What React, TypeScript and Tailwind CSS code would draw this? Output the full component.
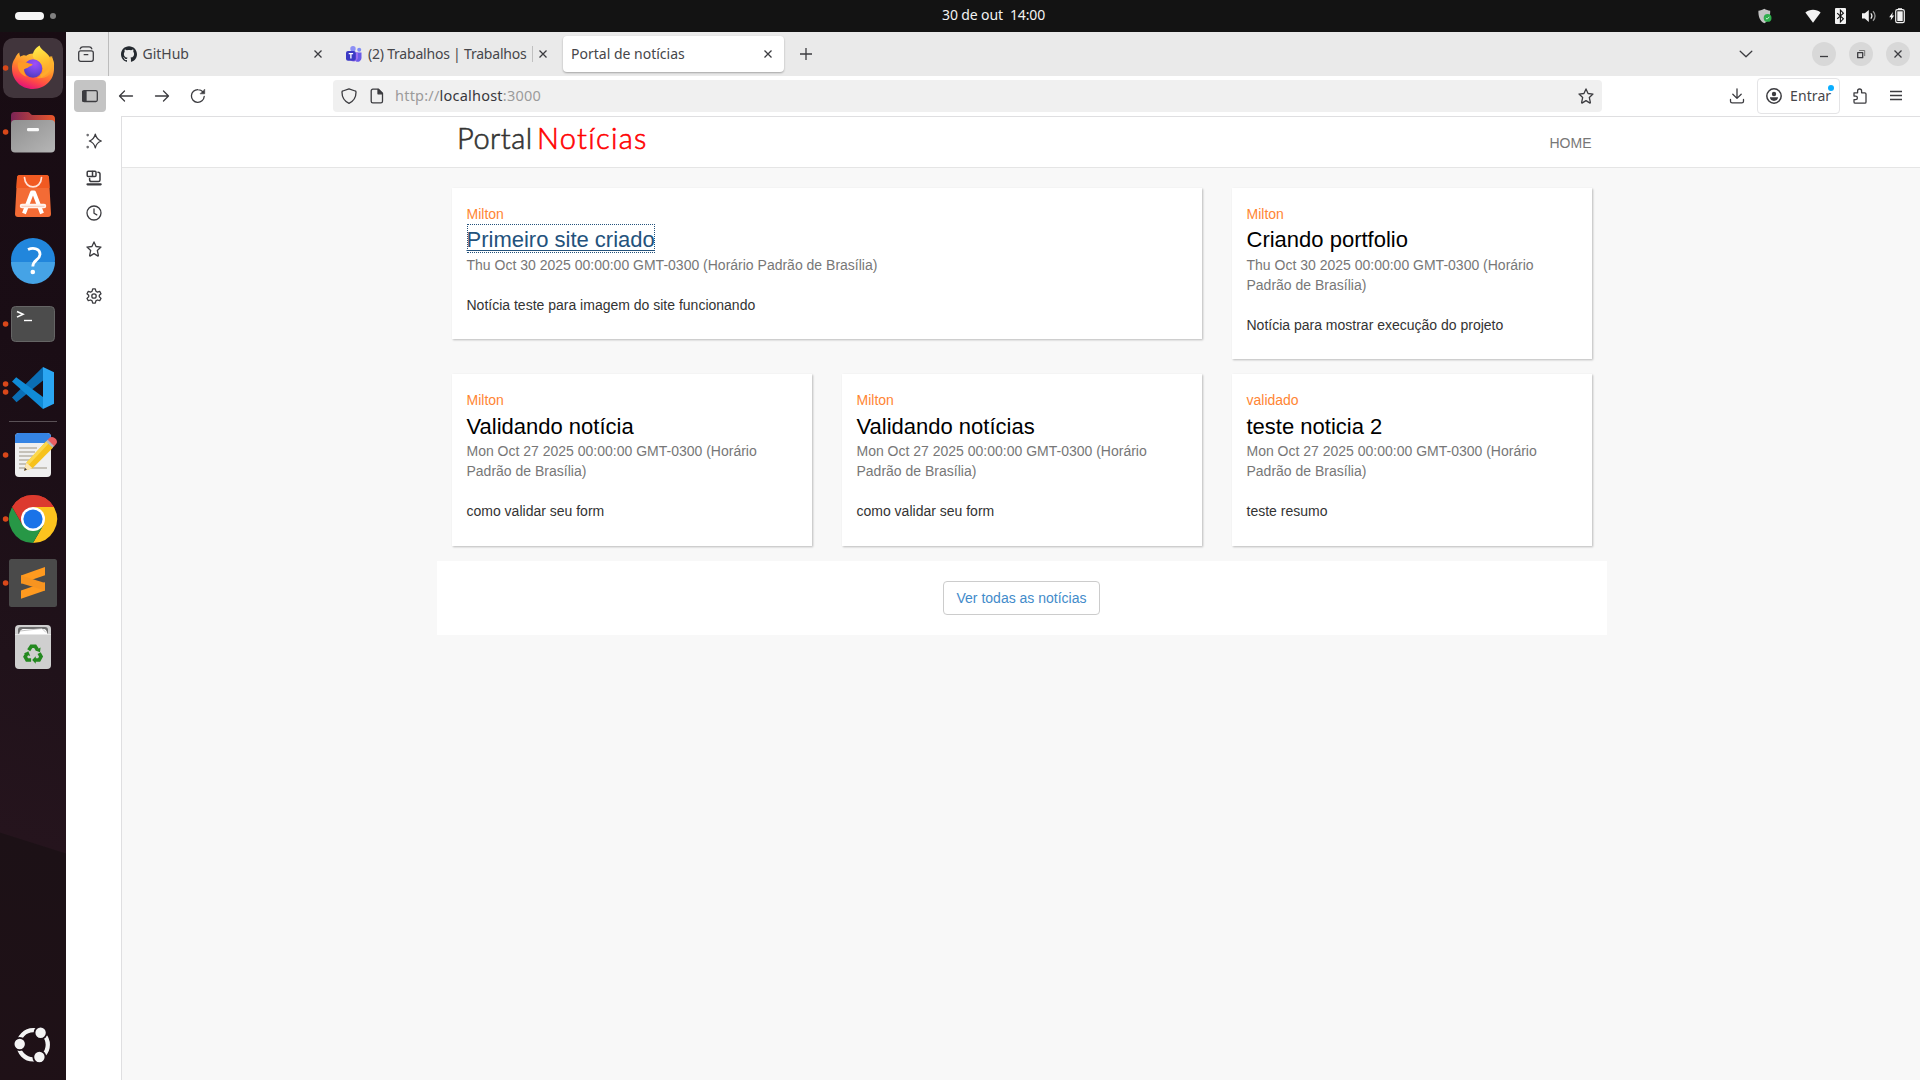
import React from "react";
import { SiGithub } from "react-icons/si";

type IconProps = { children: React.ReactNode; size?: number; className?: string };

function Line({ children, size = 16, className = "" }: IconProps) {
  return (
    <svg
      width={size}
      height={size}
      viewBox="0 0 16 16"
      fill="none"
      stroke="#3c3c40"
      strokeWidth="1.3"
      strokeLinecap="round"
      strokeLinejoin="round"
      className={"shrink-0 " + className}
    >
      {children}
    </svg>
  );
}

const STAR =
  "M8 .9l2.05 4.6 4.95.55-3.7 3.4 1.05 4.95c.1.55-.3.75-.7.5L8 12.6l-3.65 2.3c-.4.25-.8.05-.7-.5L4.7 9.45 1 6.05l4.95-.55z";

function CloseGlyph() {
  return (
    <Line>
      <path d="M4.5 4.5l7 7M11.5 4.5l-7 7" strokeLinecap="butt" />
    </Line>
  );
}

/* ---------- System bar ---------- */

function TopBar() {
  return (
    <header className="relative flex h-8 shrink-0 items-center bg-[#131313] text-[#f2f2f2]">
      <div className="ml-[15px] h-2 w-[29px] rounded-full bg-[#f6f6f6]" />
      <div className="ml-[6px] h-[6px] w-[6px] rounded-full bg-[#808080]" />
      <div className="absolute left-[942px] top-[5px] whitespace-pre text-[14px] leading-5 tracking-[-0.12px]">
        30 de out&nbsp;&nbsp;14:00
      </div>
      <div className="ml-auto flex items-center pr-[15px]">
        <svg width="14" height="16" viewBox="0 0 14 16" className="mr-[33px]">
          <path d="M6.3.8C4.600 2 2.500 2.600.4 2.700c-.1 5 .9 10 5.900 12.500 4.800-2.400 6-7.500 5.900-12.500C10.100 2.600 8 2 6.300.8z" fill="#c4c4c4" />
          <circle cx="9.600" cy="9.900" r="3.900" fill="#2fae4c" />
          <path d="M7.900 10l1.200 1.200 2.200-2.400" stroke="#d9f5df" fill="none" strokeWidth=".9" />
        </svg>
        <svg width="16" height="16" viewBox="0 0 16 16">
          <path d="M.4 4.600C4.600.8 11.400.8 15.600 4.600L8 14.800z" fill="#f2f2f2" />
        </svg>
        <svg width="11" height="16" viewBox="0 0 11 16" className="ml-[14px]">
          <rect width="11" height="16" rx="1" fill="#f2f2f2" />
          <path d="M2.200 5.200l6.200 5.600-3 3V2.200l3 3-6.200 5.600" fill="none" stroke="#131313" strokeWidth="1.100" />
        </svg>
        <svg width="16" height="16" viewBox="0 0 16 16" className="ml-[15px]">
          <path d="M1 5.200h2.800L7.800 2v12l-4-3.400H1z" fill="#f2f2f2" />
          <path d="M9.800 5.400c1.300 1.500 1.300 3.700 0 5.200" fill="none" stroke="#f2f2f2" strokeWidth="1.300" />
          <path d="M12 3.200c2.700 2.700 2.700 6.900 0 9.600" fill="none" stroke="#9a9a9a" strokeWidth="1.300" />
        </svg>
        <svg width="16" height="16" viewBox="0 0 16 16" className="ml-3">
          <path d="M3.900 4L.2 9.200h2l-.6 3.400 3.600-5h-2z" fill="#f2f2f2" />
          <path d="M9 .2h4v1.600H9z" fill="#f2f2f2" />
          <rect x="6.700" y="1.700" width="8.600" height="13" rx="1.600" fill="none" stroke="#f2f2f2" strokeWidth="1.200" />
          <rect x="8.300" y="3.300" width="5.400" height="9.800" fill="#f2f2f2" />
        </svg>
      </div>
    </header>
  );
}

/* ---------- Dock ---------- */

function DockItem({ dots = 0, active = false, children }: { dots?: number; active?: boolean; children: React.ReactNode }) {
  return (
    <div className="h-16 w-[66px] shrink-0">
      <svg width="66" height="64" viewBox="0 0 66 64">
        {active && <rect x="3" y="2" width="60" height="60" rx="10.500" fill="#41353c" />}
        {children}
        {dots === 1 && <circle cx="5.600" cy="32" r="2.800" fill="#d9481a" />}
        {dots === 2 && (
          <>
            <circle cx="5.600" cy="28" r="2.800" fill="#d9481a" />
            <circle cx="5.600" cy="36" r="2.800" fill="#d9481a" />
          </>
        )}
      </svg>
    </div>
  );
}

function Dock() {
  return (
    <aside className="flex w-[66px] shrink-0 flex-col bg-[linear-gradient(197.6deg,#180c13_0%,#1a0d15_30%,#20121a_60%,#25141d_76.8%,#1c1116_76.9%,#1f1117_100%)] pt-1">
      <DockItem dots={1} active>
        <defs>
          <linearGradient id="ffBody" x1=".75" y1=".1" x2=".35" y2="1">
            <stop offset="0" stopColor="#ffcb3a" />
            <stop offset=".42" stopColor="#ff8a2a" />
            <stop offset=".72" stopColor="#ff4a46" />
            <stop offset="1" stopColor="#e2107a" />
          </linearGradient>
          <linearGradient id="ffFlame" x1="0" y1="0" x2=".2" y2="1">
            <stop offset="0" stopColor="#fff24e" />
            <stop offset=".55" stopColor="#ffc130" />
            <stop offset="1" stopColor="#ff9a2c" />
          </linearGradient>
          <radialGradient id="ffGlobe" cx=".6" cy=".25" r=".8">
            <stop offset="0" stopColor="#a04dfb" />
            <stop offset=".55" stopColor="#7146e0" />
            <stop offset="1" stopColor="#4b3ab8" />
          </radialGradient>
        </defs>
        <path
          d="M33 53C21 53 12 44 12 32.500c0-5.500 1.700-8.200 3.300-10.700.6-1.800 1.600-3.700 4-5.400 0 2 .6 3.300 1.200 4.300 1.600-1.400 4.200-2 5.700-.9 3-2.300 7-2.800 10-1.800 8-1.500 16 3 17.300 8.800.6 2 .5 4 .5 6C54 44 45 53 33 53z"
          fill="url(#ffBody)"
        />
        <path
          d="M39.500 9.500c-5 3-7.500 7.500-6.300 11.800.6 2.200 3.300 3 5.700 4.500 4.100 2.700 5.100 8.200 2.600 12.200-1.500 2.400-3.500 3.500-5 4 8 1.500 16.500-3.500 17.500-11.500.4-3.200-.3-7.500-3.200-10.500 0 1-.3 1.600-.8 2-1.700-5.500-9-7.500-10.500-12.500z"
          fill="url(#ffFlame)"
        />
        <path d="M50.800 20.500c1.600 9-2 16.500-10.300 19.500" fill="none" stroke="#ffb02c" strokeWidth="3" opacity=".7" />
        <circle cx="33" cy="32.500" r="9.300" fill="url(#ffGlobe)" />
        <path
          d="M18 26.300c4 .3 8-.8 10.300 1 1.500.3 4 .3 4.300 1.200.2 1-3.300 1.900-4.300 2.800-1.200 1.200-2.800 1-4.300 2.200.2 3 .9 5.500 3 7.300-6.500-1.500-10.300-8-9-14.500z"
          fill="#ff9a26"
        />
      </DockItem>

      <DockItem dots={1}>
        <defs>
          <linearGradient id="fdBack" x1="0" x2="1">
            <stop offset="0" stopColor="#7b2456" />
            <stop offset="1" stopColor="#e9572a" />
          </linearGradient>
          <linearGradient id="fdFront" x1="0" y1="0" x2="1" y2="1">
            <stop offset="0" stopColor="#8f8f8f" />
            <stop offset="1" stopColor="#b6b6b6" />
          </linearGradient>
        </defs>
        <path d="M11 26V15.500a3.500 3.500 0 013.500-3.500H28c2 0 2.500 3 4.500 3H51a4 4 0 014 4v10H11z" fill="url(#fdBack)" />
        <rect x="11" y="20" width="44" height="32.500" rx="4" fill="url(#fdFront)" />
        <rect x="27" y="28" width="12" height="3.200" rx="1.200" fill="#fafafa" />
      </DockItem>

      <DockItem>
        <path d="M20 11h26a3 3 0 013 3l2 36a3 3 0 01-3 3H18a3 3 0 01-3-3l2-36a3 3 0 013-3z" fill="#f36b35" />
        <path d="M20 11h26a3 3 0 013 3l.6 10H16.400L17 14a3 3 0 013-3z" fill="#f15a22" />
        <path d="M24.500 13.500c.5 12.500 16.500 12.500 17 0" fill="none" stroke="#ffe3d8" strokeWidth="1.700" strokeLinecap="round" />
        <path d="M24 49.500l8-21h2l8 21" fill="none" stroke="#fff" strokeWidth="4" strokeLinejoin="round" />
        <path d="M22 42h22" stroke="#fff3ee" strokeWidth="4.500" strokeLinecap="round" />
        <path d="M21.500 42.300h23" stroke="#f9b59b" strokeWidth=".7" />
      </DockItem>

      <DockItem>
        <circle cx="33" cy="32" r="22" fill="#2186dc" />
        <path d="M11 34h44a22 22 0 01-44 0z" fill="#45a3e6" />
        <path d="M28 21.500c6-2.800 12.300-.2 12 5-.3 5.500-7.200 5.500-7.200 12" fill="none" stroke="#fff" strokeWidth="2.800" />
        <circle cx="32.800" cy="44" r="2.300" fill="#fff" />
      </DockItem>

      <DockItem dots={1}>
        <rect x="11.500" y="14.500" width="43" height="35" rx="4" fill="#4c4c4c" stroke="#656565" />
        <path d="M17 19.500l6 2.800-6 2.800" fill="none" stroke="#fff" strokeWidth="1.600" />
        <path d="M24 28.500h8" stroke="#fff" strokeWidth="1.400" />
      </DockItem>

      <DockItem dots={2}>
        <path d="M12 41.500l4.500 4.800L43 24.500V11z" fill="#0a6eb5" />
        <path d="M12 25.500l4.200-4.300L43 41v12z" fill="#108bd6" />
        <path d="M43 11l11 5.200v31.600L43 53z" fill="#2ba6f2" />
      </DockItem>

      <div className="flex h-[3px] shrink-0 items-center justify-center">
        <div className="h-px w-12 bg-[#5a5156]" />
      </div>

      <DockItem dots={1}>
        <rect x="15" y="10" width="36" height="44" rx="4" fill="#efefef" />
        <path d="M15 20v-6a4 4 0 014-4h28a4 4 0 014 4v6z" fill="#3584e4" />
        <path d="M19 25h18M19 29h16M19 33h14M19 37h12M19 41h8M19 45h28" stroke="#c5c1b9" strokeWidth="1.800" />
        <path d="M24 47.700l2.500-8.200L46.500 18l6.700 6.400-20.700 20.800z" fill="#f6c21c" />
        <path d="M26.500 39.500L46.500 18l2.300 2.200-20 21.500z" fill="#fbd84e" />
        <path d="M24 47.700l2.500-8.200 6 5.700z" fill="#fbe6b6" />
        <path d="M24 47.700l.9-2.900 2.100 2z" fill="#3d3846" />
        <path d="M47.500 17l2-2.200c3.500-3 9.500 2.200 6.800 6l-2.300 2.700z" fill="#ea5f62" />
        <path d="M46 18.500l1.700-1.700 6.500 6.200-1.600 1.800z" fill="#b9b9bd" />
      </DockItem>

      <DockItem dots={1}>
        <path d="M33 32L12.200 20A24 24 0 0153.800 20z" fill="#dc3a2e" />
        <path d="M33 20h20.800A24 24 0 0133 56l10.400-18z" fill="#fcc31e" />
        <path d="M12.200 20A24 24 0 0033 56l10.400-18-20.800 0z" fill="#279746" />
        <path d="M12.200 20A24 24 0 0153.800 20H33L22.600 38z" fill="#dc3a2e" />
        <circle cx="33" cy="32" r="12" fill="#fff" />
        <circle cx="33" cy="32" r="9.600" fill="#1a73e8" />
      </DockItem>

      <DockItem dots={1}>
        <rect x="9" y="8" width="48" height="48" rx="2.500" fill="#4a4a4a" />
        <path d="M21 24.500l24-8.500v8.200l-24 8.300z" fill="#ff9a1f" />
        <path d="M21 39.500l24-8.300v8.200L21 47.700z" fill="#ff9a1f" />
        <path d="M21 24.500l24 7.600v7.400l-24-7.300z" fill="#f79420" />
      </DockItem>

      <DockItem>
        <rect x="15" y="10" width="36" height="44" rx="4" fill="#cfcfcf" />
        <rect x="18" y="12" width="30" height="8" rx="3" fill="#6d6d6d" />
        <path d="M19 19.500c1-4 2-5.500 5-5.500h19c3 0 4 2 4.500 5.500z" fill="#fff" />
        <path d="M20 16l22-2.500 4 4" fill="none" stroke="#b5b5b5" strokeWidth=".8" />
        <path d="M15 19.500h36" stroke="#e6e6e6" />
        <g transform="translate(1.200 1.600) scale(.965 .95)">
          <g fill="none" stroke="#23881f" strokeWidth="3.700">
            <path d="M28.500 35.500l2.700-4.200h4l2.300 3.600" />
            <path d="M39.300 38.500l2 3.600-2 3.600H34" />
            <path d="M31 45.700h-4.300l-1.900-3.500 2.100-3.600" />
          </g>
          <path d="M40.800 32.500l-.6 5-4.700-1.700zM35.800 41.700v8l-3.700-4zM23.500 39l4.600-2.400 2 4.800z" fill="#23881f" />
        </g>
      </DockItem>

      <div className="mt-auto flex h-[73px] w-[66px] items-center justify-center">
        <svg width="40" height="40" viewBox="0 0 40 40">
          <circle cx="20.200" cy="20.800" r="14.600" fill="none" stroke="#f4f4f4" strokeWidth="4.300" />
          <g fill="#f4f4f4" stroke="#1e1118" strokeWidth="1.800">
            <circle cx="6.700" cy="20" r="6.100" />
            <circle cx="27.600" cy="8.800" r="6.100" />
            <circle cx="26.400" cy="33" r="6.100" />
          </g>
        </svg>
      </div>
    </aside>
  );
}

/* ---------- Browser chrome ---------- */

function TabStrip() {
  return (
    <div className="flex h-11 shrink-0 items-center bg-[#eaeaea] text-[14px] leading-5 text-[#46464a]">
      <div className="flex h-full w-[43px] items-center justify-center border-r border-[#bcbcbc]">
        <Line className="-ml-[2px]">
          <rect x=".7" y="4.800" width="14.600" height="10.500" rx="2" />
          <path d="M2.200 2.800c.4-1.300 1.300-2 2.600-2h6.400c1.300 0 2.200.7 2.600 2M6.200 8.700h3.600" />
        </Line>
      </div>
      <div className="ml-1 flex w-[225px] items-center pl-2">
        <SiGithub size={16} color="#24292f" className="shrink-0" />
        <span className="ml-[5.5px] tracking-[-0.02px]">GitHub</span>
        <div className="ml-auto mr-3">
          <CloseGlyph />
        </div>
      </div>
      <div className="flex w-[225px] items-center pl-2">
        <svg width="16" height="16" viewBox="0 0 16 16" className="shrink-0">
          <circle cx="13.200" cy="3.800" r="2" fill="#7e8bf5" />
          <circle cx="7" cy="2.800" r="2.700" fill="#8c8ff5" />
          <path d="M10 6.600h5.500v5.400a3.900 3.900 0 01-5.500 3.500z" fill="#6a5be8" />
          <path d="M3.500 6.600H12v5.200a4.300 4.300 0 01-8.500 0z" fill="#9a6ef0" />
          <rect x="0" y="5" width="9.800" height="9.800" rx="2" fill="#3b39c4" />
          <path d="M2.700 7.600h4.400M4.900 7.600v5" stroke="#fff" strokeWidth="1.300" />
        </svg>
        <span className="ml-[6px] w-[164px] whitespace-nowrap tracking-[-0.21px]">(2) Trabalhos | Trabalhos</span>
        <span className="h-4 w-px bg-[#c0c0c0]" />
        <div className="ml-auto mr-3">
          <CloseGlyph />
        </div>
      </div>
      <div className="flex h-9 w-[221px] items-center rounded bg-white pl-2 shadow-[0_1px_2px_rgba(0,0,0,0.3)]">
        <span>Portal de notícias</span>
        <div className="ml-auto mr-2">
          <CloseGlyph />
        </div>
      </div>
      <Line className="ml-[13.5px]">
        <path d="M8 2v12M2 8h12" strokeLinecap="butt" />
      </Line>
      <Line className="ml-auto mr-[58px]">
        <path d="M2.200 5.200L8 10.800l5.800-5.600" />
      </Line>
      <div className="mr-[10px] flex gap-[13px]">
        <div className="flex h-6 w-6 items-center justify-center rounded-full bg-[#d8d8d8]">
          <Line>
            <path d="M4 10.500h8" strokeLinecap="butt" />
          </Line>
        </div>
        <div className="flex h-6 w-6 items-center justify-center rounded-full bg-[#d8d8d8]">
          <Line>
            <path d="M4.700 6.700h5v5h-5z" />
            <path d="M6.500 4.500h5.200v5.200" strokeWidth="1" stroke="#777" />
          </Line>
        </div>
        <div className="flex h-6 w-6 items-center justify-center rounded-full bg-[#d8d8d8]">
          <CloseGlyph />
        </div>
      </div>
    </div>
  );
}

function NavBar() {
  return (
    <div className="flex h-10 shrink-0 items-center bg-white text-[14px] leading-5 text-[#46464a]">
      <div className="ml-2 flex h-8 w-8 items-center justify-center rounded bg-[#c4c4c4]">
        <Line>
          <rect x=".7" y="2.700" width="14.600" height="10.800" rx="1.500" />
          <path d="M.7 3.500h3.300v9.600H.7z" fill="#3c3c40" />
        </Line>
      </div>
      <div className="ml-3 flex items-center gap-5">
        <Line>
          <path d="M14.500 8H1.600M6.500 3L1.500 8l5 5" />
        </Line>
        <Line>
          <path d="M1.500 8h12.900M9.500 3l5 5-5 5" />
        </Line>
        <Line>
          <path d="M14.200 8.500A6.400 6.400 0 118 1.600c2 0 3.800.9 5 2.300" />
          <path d="M14.700 1.500v4.300h-4.300z" fill="#3c3c40" strokeWidth=".6" />
        </Line>
      </div>
      <div className="ml-[127px] flex h-8 w-[1269px] items-center rounded bg-[#f0f0f0] pl-2 pr-2">
        <Line>
          <path d="M8 .8L14.200 3c.8 0 .8.4.8 1 .1 5.200-2.300 9.300-7 11.300C3.300 13.300.9 9.200 1 4c0-.6 0-1 .8-1z" />
        </Line>
        <Line className="ml-3">
          <path d="M3.800 1.200h5.700l4 4v8a1.600 1.600 0 01-1.600 1.600H3.800a1.600 1.600 0 01-1.600-1.600V2.800a1.600 1.600 0 011.600-1.600z" />
          <path d="M9 1.400v4.400h4.400z" fill="#3c3c40" />
        </Line>
        <span className="mb-[2px] ml-[10px] text-[14.5px] tracking-[0.22px] text-[#9b9b9b]">
          http://<span className="text-[#38383d]">localhost</span>:3000
        </span>
        <Line className="ml-auto">
          <path d={STAR} />
        </Line>
      </div>
      <Line className="ml-[127px]">
        <path d="M8 .8v9.400M3.800 6.200L8 10.400l4.200-4.200M1.500 11.500v1.700a1.700 1.700 0 001.700 1.700h9.600a1.700 1.700 0 001.700-1.700v-1.700" />
      </Line>
      <div className="relative ml-3 flex h-9 w-[83px] shrink-0 items-center rounded border border-[#e4e4e6] pl-2">
        <Line>
          <circle cx="8" cy="8" r="7.200" strokeWidth="1.500" />
          <circle cx="8" cy="6" r="2.200" fill="#3c3c40" strokeWidth="0" />
          <path d="M3.900 9.300h8.200c-.2 2.200-1.800 3.600-4.100 3.600s-3.900-1.400-4.100-3.600z" fill="#3c3c40" strokeWidth="0" />
        </Line>
        <span className="ml-2 tracking-[0.1px]">Entrar</span>
        <span className="absolute right-[5px] top-[6px] h-[6px] w-[6px] rounded-full bg-[#0aaeff]" />
      </div>
      <Line className="ml-3">
        <path d="M2 4.800h3.600V3a2 2 0 014 0v1.800h3.200a1.200 1.200 0 011.200 1.200v8a1.200 1.200 0 01-1.200 1.200H3.200A1.200 1.200 0 012 14v-2.300h1.600a1.800 1.800 0 000-3.600H2z" />
      </Line>
      <Line className="ml-5">
        <path d="M2 3.500h12M2 7.500h12M2 11.500h12" strokeLinecap="butt" />
      </Line>
    </div>
  );
}

function SideRail() {
  return (
    <div className="flex w-[55px] shrink-0 flex-col items-center bg-white pt-[17px]">
      <Line>
        <path d="M9.300 1.200c.9 3.900 2.200 5.600 6 6.800-3.800 1.200-5.100 2.900-6 6.800-.9-3.900-2.200-5.600-6-6.800 3.800-1.200 5.100-2.900 6-6.800z" />
        <path d="M1.700 2v.1M1.700 14v.1" strokeWidth="2.600" stroke="#707074" />
      </Line>
      <Line className="ml-[1px] mt-[21px]">
        <rect x="1.200" y="1.200" width="8.800" height="5.200" rx="1" strokeWidth="1.500" />
        <path d="M6.500 1.500v4.700M12 2.300c1.300 0 2 .6 2 1.800v6c0 1-.6 1.500-1.500 1.500h-7c-1.200 0-1.900-.6-1.900-1.800V8.600" strokeWidth="1.500" />
        <path d="M1.500 14.300h13.200" strokeWidth="2.200" />
      </Line>
      <Line className="mt-[19px]">
        <circle cx="8" cy="8" r="7" />
        <path d="M8 4v4.300l2.800 1.600" />
      </Line>
      <Line className="ml-[1px] mt-5">
        <path d={STAR} />
      </Line>
      <Line className="ml-[1px] mt-[31px]">
        <path d="M6.700.9h2.600l.6 2.300 1.500.9 2.300-.7 1.300 2.300-1.700 1.600v1.500l1.700 1.600-1.300 2.300-2.300-.7-1.500.9-.6 2.300H6.700l-.6-2.300-1.500-.9-2.300.7L1 10.400l1.700-1.600V7.300L1 5.700l1.300-2.300 2.300.7 1.500-.9z" />
        <circle cx="8" cy="8" r="2.200" />
      </Line>
    </div>
  );
}

/* ---------- News portal page ---------- */

type News = { author: string; title: string; date: string; summary: string; wide?: boolean; focused?: boolean };

const THU = "Thu Oct 30 2025 00:00:00 GMT-0300 (Horário Padrão de Brasília)";
const MON = "Mon Oct 27 2025 00:00:00 GMT-0300 (Horário Padrão de Brasília)";

const news: News[] = [
  { author: "Milton", title: "Primeiro site criado", date: THU, summary: "Notícia teste para imagem do site funcionando", wide: true, focused: true },
  { author: "Milton", title: "Criando portfolio", date: THU, summary: "Notícia para mostrar execução do projeto" },
  { author: "Milton", title: "Validando notícia", date: MON, summary: "como validar seu form" },
  { author: "Milton", title: "Validando notícias", date: MON, summary: "como validar seu form" },
  { author: "validado", title: "teste noticia 2", date: MON, summary: "teste resumo" },
];

function Card({ item, lowered }: { item: News; lowered: boolean }) {
  return (
    <article
      className={
        (item.wide ? "col-span-2 " : "") +
        (lowered ? "pb-[25px] " : "pb-6 ") +
        "bg-white pl-[14.5px] pr-[15px] pt-4 shadow-[1px_1px_2px_rgba(0,0,0,0.25)]"
      }
    >
      <p className="text-[#ff8533]">{item.author}</p>
      <h3 className={"text-[22px] leading-[31.4px] text-black " + (lowered ? "-mb-px pt-px" : "")}>
        {item.focused ? (
          <a className="pb-[1px] pt-[3px] text-[#23527c] underline decoration-1 underline-offset-[3px] outline-dotted outline-1 -outline-offset-1 outline-[#23527c]">
            {item.title}
          </a>
        ) : (
          item.title
        )}
      </h3>
      <p className="text-[#777]">{item.date}</p>
      <p className="mt-5 text-[#333]">{item.summary}</p>
    </article>
  );
}

function Page() {
  return (
    <main className="min-w-0 flex-1 border-l border-t border-[#dfdfe1] bg-[#f8f8f8] font-['Liberation_Sans',Arial,sans-serif] text-[14px] leading-5 text-[#333]">
      <div className="h-[51px] border-b border-[#e5e5e5] bg-white">
        <div className="ml-[315px] flex h-full w-[1170px] justify-between pl-5 pr-[15.5px]">
          <div className="flex items-baseline whitespace-nowrap font-['Lato',sans-serif] text-[29px] font-light leading-[42px] [-webkit-text-stroke-width:0.6px]">
            <span className="w-[80px] tracking-[0.5px] text-[#333]">Portal</span>
            <span className="tracking-[1.3px] text-[#f00]">Notícias</span>
          </div>
          <span className="pt-4 text-[#777]">HOME</span>
        </div>
      </div>
      <div className="ml-[315px] w-[1170px] pt-5">
        <div className="grid grid-cols-3 items-start gap-x-[30px] gap-y-[14.6px] px-[15px]">
          {news.map((item, i) => (
            <Card key={i} item={item} lowered={i > 1} />
          ))}
        </div>
        <div className="mt-[14.6px] flex h-[74px] items-center justify-center bg-white">
          <a className="mr-px rounded border border-[#ccc] px-[12.5px] py-[6px] text-[#428bca]">Ver todas as notícias</a>
        </div>
      </div>
    </main>
  );
}

export default function App() {
  return (
    <div className="flex h-[1080px] w-[1920px] flex-col overflow-hidden bg-white font-['Noto_Sans',sans-serif]">
      <TopBar />
      <div className="flex min-h-0 flex-1">
        <Dock />
        <div className="flex min-w-0 flex-1 flex-col">
          <TabStrip />
          <NavBar />
          <div className="flex min-h-0 flex-1">
            <SideRail />
            <Page />
          </div>
        </div>
      </div>
    </div>
  );
}
